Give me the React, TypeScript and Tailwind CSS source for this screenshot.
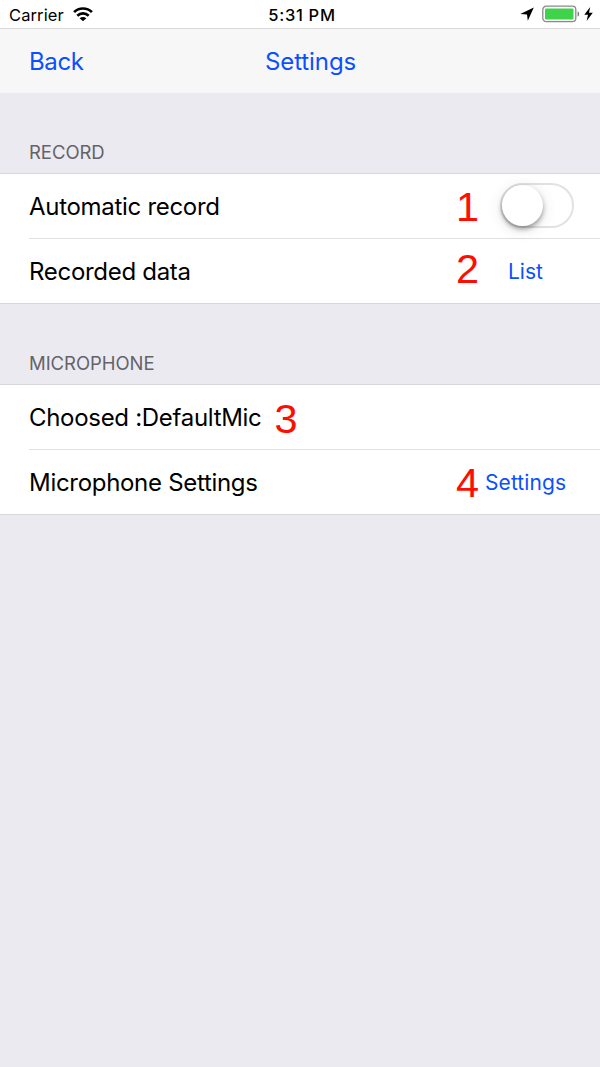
import type { ReactNode } from 'react'

function WifiIcon() {
  return (
    <svg className="ml-[9px] h-[14px] w-[20px]" viewBox="0 0 20 14" fill="none" stroke="#000" strokeWidth="2.7">
      <path d="M1.1 5.1C6 .3 14 .3 18.9 5.1" />
      <path d="M4.3 8.7C7.6 5.6 12.4 5.6 15.7 8.7" />
      <path d="M10 14.2L6.6 11.2Q10 8.9 13.4 11.2Z" fill="#000" stroke="none" />
    </svg>
  )
}

function StatusBar() {
  return (
    <div className="flex h-7 items-center bg-white text-black">
      <div className="flex flex-1 items-center pl-[9px]">
        <span className="pt-[2px] text-[16.5px] leading-[28px] tracking-[0.1px]">Carrier</span>
        <WifiIcon />
      </div>
      <span className="pt-[2px] pl-[2px] text-[16.5px] leading-[28px] font-medium tracking-[0.7px]">5:31 PM</span>
      <div className="flex flex-1 items-center justify-end pr-[7px]">
        <svg className="h-[14px] w-[14px]" viewBox="0 0 14 14">
          <path d="M13.8.6L7.8 13.8L7 7.6L.3 7Z" />
        </svg>
        <svg className="ml-[8px] h-[18px] w-[38px]" viewBox="0 0 38 18">
          <rect x=".8" y="1.2" width="33" height="15.4" rx="3.4" fill="#fff" stroke="#8a8a8a" strokeWidth="1.3" />
          <rect x="3" y="3.5" width="28.5" height="11" rx="1.2" fill="#3fd34b" />
          <path d="M35.6 6.2Q37.2 7 37.2 9T35.6 11.8Z" fill="#777" />
        </svg>
        <svg className="ml-[4px] h-[14px] w-[9px]" viewBox="0 0 9 14">
          <path d="M6.2 0L.3 7.8H4L2.6 14L8.8 5.7H5Z" />
        </svg>
      </div>
    </div>
  )
}

function NavBar() {
  return (
    <div className="flex h-[65px] items-center border-t border-[#d8d8d9] bg-[#f7f7f7] pt-px pl-[29px] text-[24px] text-[#0b50ff]">
      <button className="w-[236px] text-left tracking-[-0.4px]">Back</button>
      <button className="tracking-[-0.1px]">Settings</button>
    </div>
  )
}

function Section({ title, children }: { title: string; children: ReactNode }) {
  return (
    <section>
      <h2 className="flex h-[80px] items-end pb-[8px] pl-[29px] text-[18.5px] leading-[26px] tracking-[-0.05px] text-[#636368]">{title}</h2>
      <div className="border-y border-[#d8d8dc] bg-white">{children}</div>
    </section>
  )
}

function Row({ label, last, children }: { label: string; last?: boolean; children?: ReactNode }) {
  return (
    <div className={last ? 'flex h-[64px] pl-[29px]' : 'flex h-[65px] pl-[29px]'}>
      <div className={last ? 'flex flex-1 items-center' : 'flex flex-1 items-center border-b border-[#e0e0e2]'}>
        <span className="pt-[2px] text-[24px] tracking-[-0.3px] text-black">{label}</span>
        {children}
      </div>
    </div>
  )
}

function Marker({ n }: { n: number }) {
  return <span className="w-[24px] pl-px font-['Liberation_Sans',sans-serif] text-[41.5px] leading-[48px] text-[#ff0d00]">{n}</span>
}

function Toggle() {
  return (
    <button className="h-[45px] w-[74px] rounded-full border-2 border-[#e2e2e2] bg-white">
      <span className="block h-[41px] w-[41px] rounded-full bg-white shadow-[0_3px_5px_rgba(0,0,0,0.35),0_3px_16px_rgba(0,0,0,0.12)]" />
    </button>
  )
}

export default function App() {
  return (
    <div className="h-[1067px] w-[600px] overflow-hidden bg-[#ebeaf0] font-['Inter',sans-serif]">
      <StatusBar />
      <NavBar />
      <Section title="RECORD">
        <Row label="Automatic record">
          <div className="ml-auto flex items-center pr-[26px] pb-px">
            <div className="flex pt-[3px]">
              <Marker n={1} />
            </div>
            <div className="ml-[21px] flex">
              <Toggle />
            </div>
          </div>
        </Row>
        <Row label="Recorded data" last>
          <div className="ml-auto flex w-[145px] items-center">
            <div className="flex pb-[5px]">
              <Marker n={2} />
            </div>
            <button className="ml-[29px] pt-[2px] text-[21px] text-[#0b50ff]">List</button>
          </div>
        </Row>
      </Section>
      <Section title="MICROPHONE">
        <Row label="Choosed :DefaultMic">
          <div className="ml-[12px] flex pt-[4px]">
            <Marker n={3} />
          </div>
        </Row>
        <Row label="Microphone Settings" last>
          <div className="ml-auto flex w-[145px] items-center">
            <div className="flex pt-px">
              <Marker n={4} />
            </div>
            <button className="ml-[6px] pt-[2px] text-[21px] tracking-[0.1px] text-[#0b50ff]">Settings</button>
          </div>
        </Row>
      </Section>
    </div>
  )
}
